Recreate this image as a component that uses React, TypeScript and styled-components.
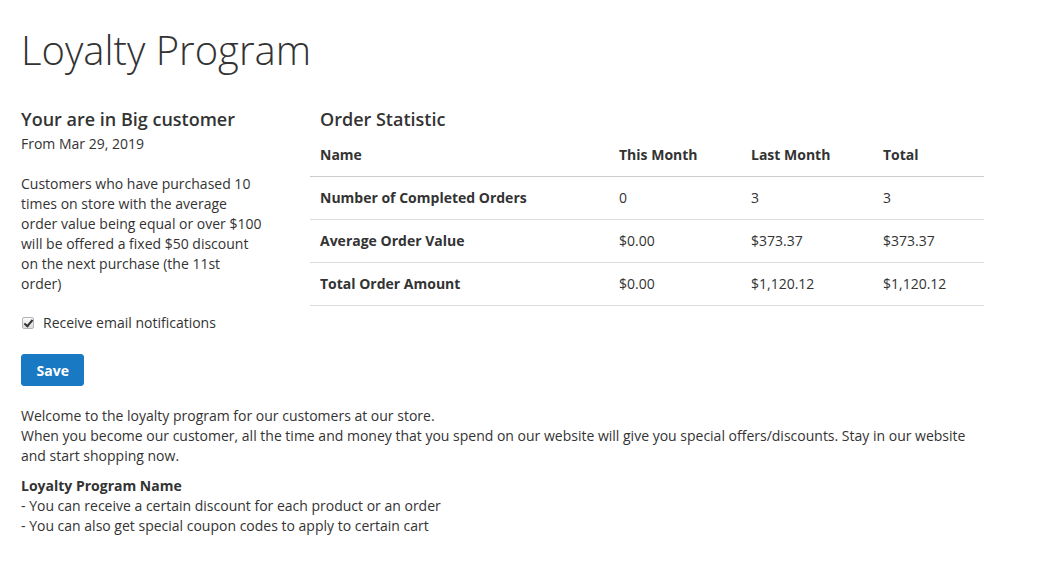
import styled, { createGlobalStyle } from "styled-components"

const GlobalStyle = createGlobalStyle`
  body {
    margin: 0;
    background: #fff;
    font-family: "Open Sans", "Liberation Sans", sans-serif;
    font-size: 14px;
    line-height: 20px;
    color: #333;
  }
`

const Page = styled.div`
  padding: 24px 21px 20px;
`

const Title = styled.h1`
  margin: 0 0 31px;
  font-size: 40px;
  line-height: 52px;
  font-weight: 300;
  color: #333;
`

const Columns = styled.div`
  display: flex;
  align-items: flex-start;
`

const Side = styled.div`
  width: 243px;
  margin-right: 46px;
`

const Heading = styled.h3`
  margin: 0 0 3px;
  font-size: 18px;
  line-height: 24px;
  font-weight: 600;
  color: #333;
`

const Description = styled.p`
  margin: 20px 0 0;
`

const CheckRow = styled.label`
  display: flex;
  align-items: center;
  gap: 9px;
  margin-top: 19px;
  cursor: pointer;
`

const Check = styled.input`
  appearance: none;
  position: relative;
  width: 12px;
  height: 12px;
  margin: 0 0 0 1px;
  border: 1px solid #b5b5b5;
  border-radius: 2px;
  background: linear-gradient(#fafafa, #dcdcdc);

  &:checked::after {
    content: "";
    position: absolute;
    left: 3px;
    top: 0px;
    width: 3px;
    height: 7px;
    border-right: 2px solid #333;
    border-bottom: 2px solid #333;
    transform: rotate(40deg);
  }
`

const SaveButton = styled.button`
  margin-top: 21px;
  height: 32px;
  padding: 0 14.5px;
  border: 1px solid #1979c3;
  border-radius: 3px;
  background: #1979c3;
  color: #fff;
  font-family: inherit;
  font-size: 14px;
  font-weight: 700;
  cursor: pointer;
`

const Stats = styled.div`
  width: 674px;
`

const StatsHeading = styled(Heading)`
  margin: 0;
  padding-left: 10px;
`

const Table = styled.table`
  width: 100%;
  table-layout: fixed;
  border-collapse: collapse;
  margin-top: 3px;
`

const Col = styled.col<{ $w: number }>`
  width: ${p => p.$w}px;
`

const Th = styled.th`
  text-align: left;
  font-weight: 700;
  padding: 11px 10px;
  border-bottom: 1px solid #ccc;
`

const Td = styled.td<{ $bold?: boolean }>`
  padding: 11px 10px;
  font-weight: ${p => (p.$bold ? 700 : 400)};
  border-bottom: 1px solid #ddd;
`

const Footer = styled.div`
  margin-top: 20px;
  width: 960px;
`

const Para = styled.p`
  margin: 0 0 10px;
`

const rows = [
  ["Number of Completed Orders", "0", "3", "3"],
  ["Average Order Value", "$0.00", "$373.37", "$373.37"],
  ["Total Order Amount", "$0.00", "$1,120.12", "$1,120.12"],
]

export default function App() {
  return <>
    <GlobalStyle />
    <Page>
      <Title>Loyalty Program</Title>
      <Columns>
        <Side>
          <Heading>Your are in Big customer</Heading>
          <div>From Mar 29, 2019</div>
          <Description>
            Customers who have purchased 10 times on store with the average order value being equal or over $100 will be offered a fixed $50 discount on the next purchase (the 11st order)
          </Description>
          <CheckRow>
            <Check type="checkbox" defaultChecked />
            Receive email notifications
          </CheckRow>
          <SaveButton>Save</SaveButton>
        </Side>
        <Stats>
          <StatsHeading>Order Statistic</StatsHeading>
          <Table>
            <colgroup>
              <Col $w={299} />
              <Col $w={132} />
              <Col $w={132} />
              <Col $w={111} />
            </colgroup>
            <thead>
              <tr>
                <Th>Name</Th>
                <Th>This Month</Th>
                <Th>Last Month</Th>
                <Th>Total</Th>
              </tr>
            </thead>
            <tbody>
              {rows.map(r =>
                <tr key={r[0]}>
                  <Td $bold>{r[0]}</Td>
                  <Td>{r[1]}</Td>
                  <Td>{r[2]}</Td>
                  <Td>{r[3]}</Td>
                </tr>
              )}
            </tbody>
          </Table>
        </Stats>
      </Columns>
      <Footer>
        <Para>
          Welcome to the loyalty program for our customers at our store.<br />
          When you become our customer, all the time and money that you spend on our website will give you special offers/discounts. Stay in our website and start shopping now.
        </Para>
        <Para>
          <b>Loyalty Program Name</b><br />
          - You can receive a certain discount for each product or an order<br />
          - You can also get special coupon codes to apply to certain cart
        </Para>
      </Footer>
    </Page>
  </>
}
